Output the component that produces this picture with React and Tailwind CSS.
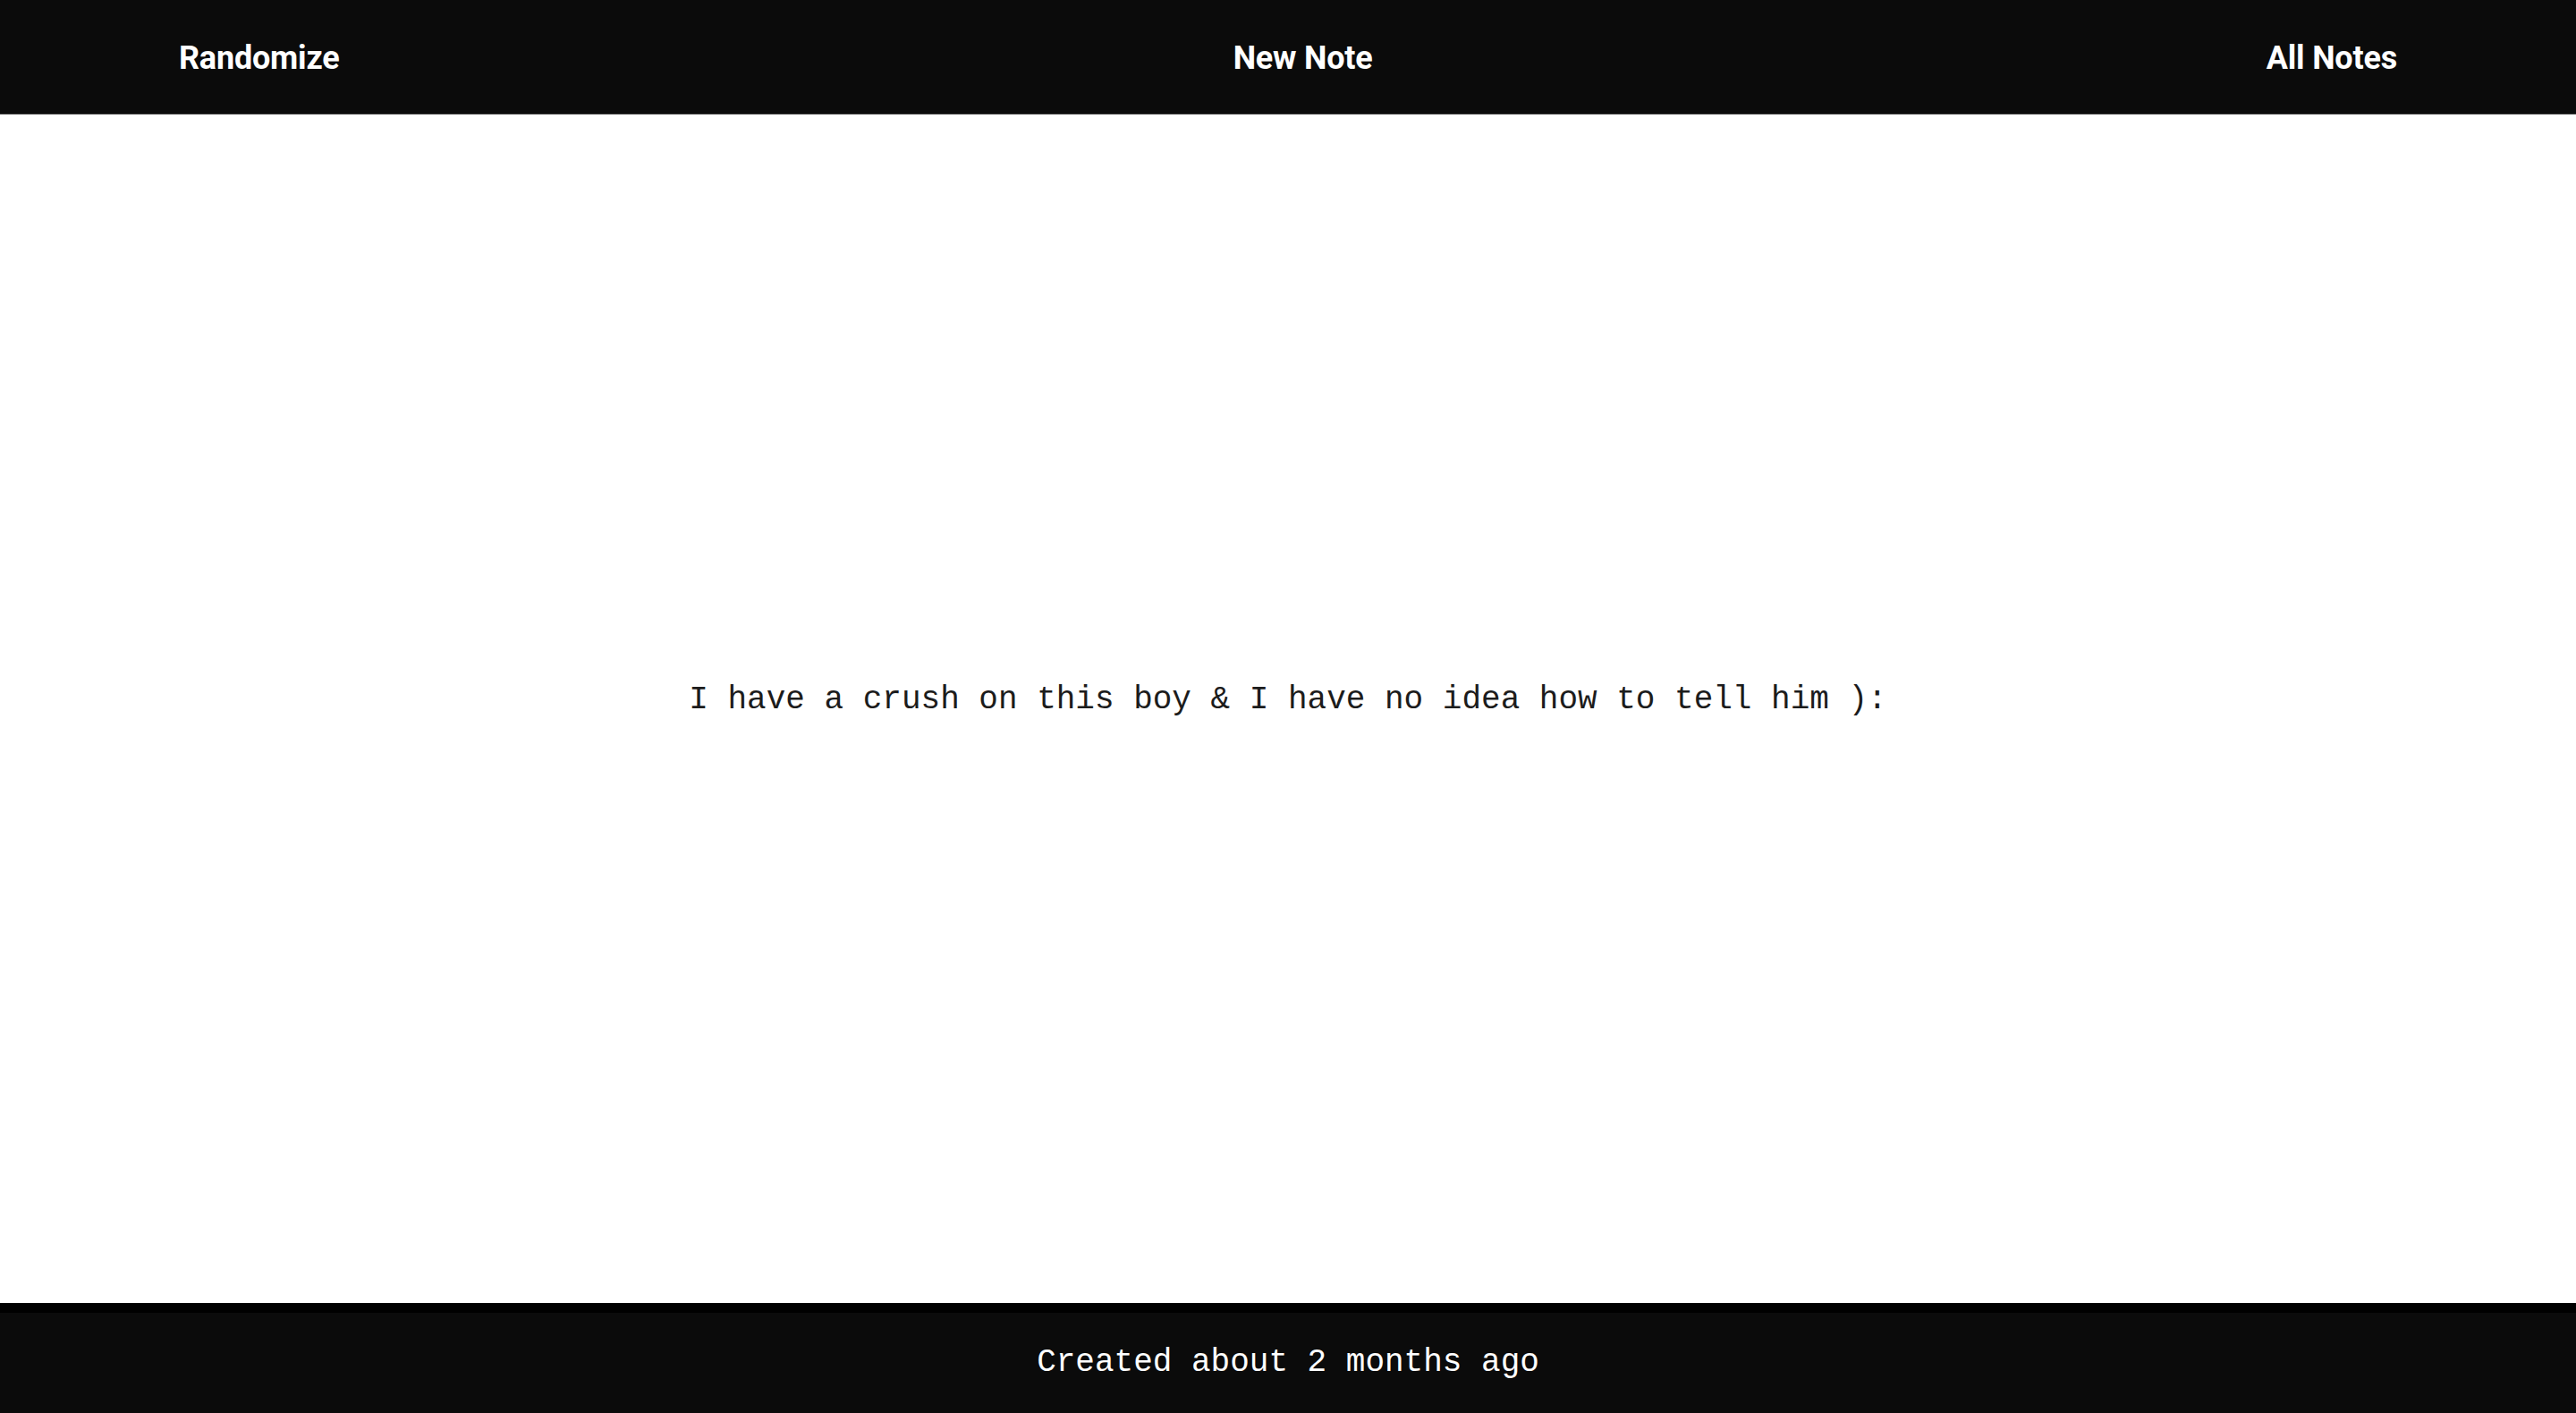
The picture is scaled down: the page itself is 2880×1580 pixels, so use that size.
import React from 'react';

const navItems = ['Randomize', 'New Note', 'All Notes'];

const App = () => {
    return (
        <div className="h-screen flex flex-col bg-white">
            {/* Top nav */}
            <header className="h-[128px] shrink-0 bg-[#0b0b0b] border-b border-[#3a3a3a] flex items-center justify-between px-[200px] pt-[2px]">
                {navItems.map((item) => (
                    <a
                        key={item}
                        href="#"
                        className="text-white text-[36px] font-bold tracking-[-0.2px] font-['Roboto',sans-serif]"
                    >
                        {item}
                    </a>
                ))}
            </header>

            {/* Note body */}
            <main className="flex-1 flex items-center justify-center pb-[20px]">
                <p className="text-[36px] text-[#1c1c1c] font-['Liberation_Mono',monospace] whitespace-pre">
                    I have a crush on this boy &amp; I have no idea how to tell him ):
                </p>
            </main>

            {/* Footer */}
            <footer className="h-[123px] shrink-0 bg-[#0b0b0b] border-t-[11px] border-black flex items-center justify-center">
                <span className="text-white text-[36px] font-['Liberation_Mono',monospace] whitespace-pre">
                    Created about 2 months ago
                </span>
            </footer>
        </div>
    );
};

export default App;
